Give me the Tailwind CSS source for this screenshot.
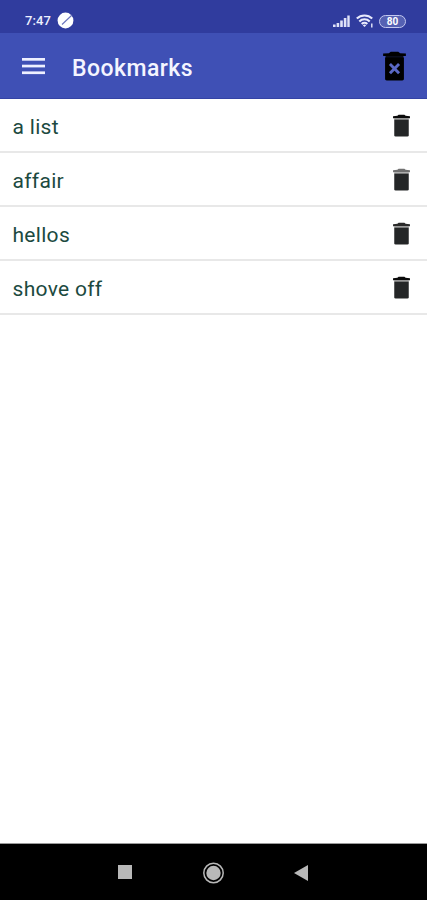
<!DOCTYPE html>
<html lang="en">

<head>
  <meta charset="UTF-8" />
  <meta name="viewport" content="width=device-width, initial-scale=1.0" />
  <title>Bookmarks</title>
  <script src="https://cdn.jsdelivr.net/npm/@tailwindcss/browser@4"></script>
</head>

<body class="bg-white font-[Roboto,sans-serif]">
  <!-- Trash icon shared by the rows -->
  <svg class="hidden">
    <symbol id="trash" viewBox="0 0 24 24">
      <path d="M6 5.5h12v1.8H6z" fill="#c4c4c4" />
      <path d="M6 20c0 .6.4 1 1 1h10c.6 0 1-.4 1-1V7.1H6V20z" fill="#242627" />
      <path d="M19 5.9H5V4.3l3.6-.3 1-1h4.8l1 1 3.6.3z" />
    </symbol>
  </svg>

  <div class="h-screen flex flex-col overflow-hidden">
    <!-- Status bar -->
    <div class="h-[33px] shrink-0 bg-[#303c9e] flex items-center justify-between pt-[9px] pl-[25px] pr-[21px] text-[#eef0ff]">
      <div class="flex items-center gap-[6px]">
        <span class="text-[13px] leading-4 font-medium tracking-[0.1px]">7:47</span>
        <svg class="w-[17px] h-[17px] -mt-[2px]" viewBox="0 0 17 17">
          <circle cx="8.5" cy="8.5" r="7.9" fill="#fff" />
          <path d="M5 12.5 15 3" stroke="#6973bd" stroke-width="1.1" />
        </svg>
      </div>
      <div class="flex items-center">
        <svg class="w-[17px] h-[13px] mr-[6px]" viewBox="0 0 17 13" fill="#dfe2f8">
          <rect x="0" y="9.5" width="2.6" height="2.5" />
          <rect x="3.6" y="8" width="2.6" height="4" />
          <rect x="7.2" y="5.5" width="2.6" height="6.5" />
          <rect x="10.8" y="3" width="2.6" height="9" />
          <rect x="14.3" y="0.5" width="2.4" height="11.5" />
        </svg>
        <svg class="w-[18px] h-[14px] mr-[5px]" viewBox="0 0 18 14" fill="none" stroke="#e8eafc" stroke-width="2.1">
          <path d="M.8 4.6a11 11 0 0 1 15.4 0" />
          <path d="M3.3 7.4a7.4 7.4 0 0 1 10.4 0" />
          <path d="M5.7 10a4 4 0 0 1 5.6 0" />
          <path d="M8.5 13 6.8 11.3a2.6 2.6 0 0 1 3.4 0z" fill="#e8eafc" stroke="none" />
          <path d="M15.8 9.5v4" stroke-width="1.4" />
        </svg>
        <div class="w-[27px] h-[13px] rounded-full border-[1.5px] border-[#c3c8ef] flex items-center justify-center bg-[#5561b3]">
          <span class="mt-px text-[10px] leading-none font-bold text-white">80</span>
        </div>
      </div>
    </div>

    <!-- App bar -->
    <header class="h-[66px] shrink-0 bg-[#3f50b5] border-b border-[#3443a5] flex items-center pl-[22px] pr-[13px]">
      <svg class="w-[23px] h-[17px] mt-[2px]" viewBox="0 0 23 17" fill="#eef0ff">
        <rect y="0" width="23" height="2.7" />
        <rect y="6.7" width="23" height="2.7" />
        <rect y="13.4" width="23" height="2.7" />
      </svg>
      <h1 class="ml-[27px] mt-[6px] text-[23px] leading-7 font-medium tracking-[0.45px] text-[#f4f5ff]">Bookmarks</h1>
      <svg class="ml-auto w-[39px] h-[39px] mt-px" viewBox="0 0 24 24">
        <path d="M6.2 19.6c0 .6.4 1 1 1h9.600c.6 0 1-.4 1-1V6.400H6.200z" />
        <path d="M19 5.600H5V4l3.500-.2 1.200-.9h4.600l1.200.9L19 4z" />
        <path d="M6.500 5h11v2h-11z" opacity=".85" />
        <path d="m9.200 10.500 5.600 5.600m0-5.600-5.600 5.600" stroke="#5a68c4" stroke-width="1.8" fill="none" />
      </svg>
    </header>

    <!-- Bookmark list -->
    <ul class="flex-1 text-[21px] leading-6 tracking-[0.3px] text-[#1c4a40]">
      <li class="h-[54px] flex items-center justify-between pl-[12.5px] pr-[11px] border-b-2 border-[#e8e8e8]">
        <span class="mt-[3px]">a list</span>
        <svg class="w-[29px] h-[29px]" fill="#0a0a0a"><use href="#trash" /></svg>
      </li>
      <li class="h-[54px] flex items-center justify-between pl-[12.5px] pr-[11px] border-b-2 border-[#e8e8e8]">
        <span class="mt-[3px]">affair</span>
        <svg class="w-[29px] h-[29px]" fill="#707070"><use href="#trash" /></svg>
      </li>
      <li class="h-[54px] flex items-center justify-between pl-[12.5px] pr-[11px] border-b-2 border-[#e8e8e8]">
        <span class="mt-[3px]">hellos</span>
        <svg class="w-[29px] h-[29px]" fill="#2a2a2a"><use href="#trash" /></svg>
      </li>
      <li class="h-[54px] flex items-center justify-between pl-[12.5px] pr-[11px] border-b-2 border-[#e8e8e8]">
        <span class="mt-[3px]">shove off</span>
        <svg class="w-[29px] h-[29px]" fill="#0a0a0a"><use href="#trash" /></svg>
      </li>
    </ul>

    <!-- System navigation -->
    <nav class="h-[57px] shrink-0 bg-black border-t border-[#9a9a9a] flex items-center justify-between pl-[118px] pr-[119px]">
      <div class="w-[14px] h-[14px] bg-[#b8b8b8]"></div>
      <svg class="w-[22px] h-[22px] mt-px" viewBox="0 0 22 22">
        <circle cx="11.5" cy="11" r="9.7" fill="none" stroke="#b8b8b8" stroke-width="1.5" />
        <circle cx="11.5" cy="11" r="7.2" fill="#b8b8b8" />
      </svg>
      <svg class="w-[14px] h-[16px] mt-px" viewBox="0 0 14 16" fill="#b8b8b8">
        <path d="M14 0v16L0 8z" />
      </svg>
    </nav>
  </div>
</body>

</html>
